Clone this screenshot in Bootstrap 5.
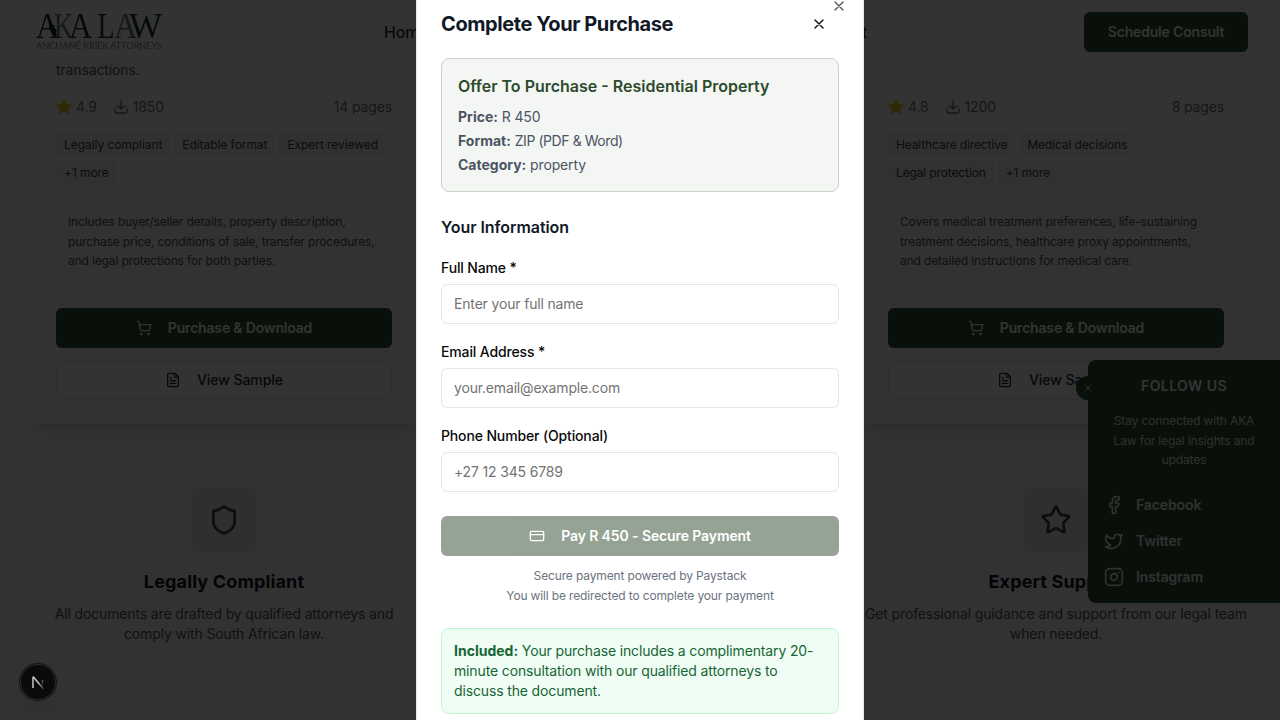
<!DOCTYPE html>
<html lang="en">
<head>
<meta charset="utf-8">
<meta name="viewport" content="width=device-width, initial-scale=1">
<title>AKA Law – Complete Your Purchase</title>
<link href="https://cdn.jsdelivr.net/npm/bootstrap@5.3.0/dist/css/bootstrap.min.css" rel="stylesheet">
<style>
  :root { --brand: #2d4a2d; }
  body { font-family: Inter, "Liberation Sans", sans-serif; font-size: 14px; line-height: 20px; letter-spacing: -.01em; height: 720px; overflow: hidden; background: #f9fafb; color: #4b5563; }
  p { margin: 0; }
  svg { flex: none; display: block; }
  .ico { fill: none; stroke: currentColor; stroke-width: 2; stroke-linecap: round; stroke-linejoin: round; }
  .ico-star { fill: #facc15; stroke: #facc15; }
  .ink { color: #111827; }

  .site-head { height: 65px; background: rgba(255,255,255,.97); border-bottom: 1px solid #f3f4f6; padding: 0 32px; z-index: 20; }
  .site-nav { width: 483px; left: 384px; font-size: 16px; font-weight: 500; color: #1f2937; }
  .b-brand, .b-line { height: 40px; border: 0; border-radius: 6px; font-size: 14px; font-weight: 600; line-height: 20px; letter-spacing: -.013em; padding: 0; }
  .b-brand, .b-brand:disabled { background: var(--brand); color: #fff; }
  .b-brand:disabled { opacity: .5; letter-spacing: -.008em; }
  .b-line { border: 1px solid #e5e7eb; color: #1f2937; background: #fff; font-weight: 500; letter-spacing: -.004em; }
  .b-consult { width: 164px; }
  .b-stack { gap: 12px; }

  .tri { display: grid; grid-template-columns: repeat(3, 384px); column-gap: 32px; padding: 0 32px; }
  .doc-card { height: 424px; padding: 60px 24px 24px; background: #fff; border-radius: 0 0 8px 8px; box-shadow: 0 10px 15px -3px rgba(0,0,0,.1), 0 4px 6px -4px rgba(0,0,0,.1); }
  .meta-row { color: #6b7280; margin-top: 17px; }
  .chips { gap: 4px; margin-top: 16px; height: 52px; align-content: flex-start; }
  .chip { background: #f3f4f6; color: #374151; border-radius: 4px; font-size: 12px; line-height: 16px; padding: 4px 8px; letter-spacing: -.005em; }
  .chips-tight .chip { letter-spacing: -.011em; }
  .includes { background: #f9fafb; border-radius: 8px; font-size: 12px; line-height: 19.5px; letter-spacing: -.012em; padding: 11px 12px 13px; height: 82.5px; margin: 16px 0 24.5px; }
  .feat { margin-top: 64px; }
  .feat-tile { width: 64px; height: 64px; border-radius: 8px; background: #e7eae7; color: var(--brand); }
  .feat h3 { font-size: 18px; line-height: 28px; font-weight: 700; letter-spacing: .008em; margin: 16px 0 8px; }

  .follow { top: 360px; right: 0; width: 192px; height: 243px; background: var(--brand); color: #fff; border-radius: 8px 0 0 8px; padding: 16px; z-index: 30; }
  .follow h4 { font-size: 14px; line-height: 20px; font-weight: 600; letter-spacing: .03em; margin: 0 0 15px; }
  .follow .blurb { font-size: 12px; line-height: 19.5px; opacity: .9; margin-bottom: 25px; }
  .follow .links { gap: 16px; font-weight: 600; letter-spacing: -.008em; opacity: .95; }
  .follow-x { width: 24px; height: 24px; left: -12px; top: 16px; border-radius: 50%; background: #2d4a2d; }

  .veil { background: rgba(0,0,0,.8); z-index: 40; }
  .buy { width: 448px; height: 758px; background: #fff; border: 1px solid #e5e7eb; padding: 24px; z-index: 50; }
  .buy-close { right: 16px; top: 16px; opacity: .7; color: #0a0a0a; }
  .buy h2 { font-size: 20px; line-height: 28px; font-weight: 700; letter-spacing: -.0206em; }
  .ghost { width: 40px; height: 36px; color: #0a0a0a; }
  .offer { margin-top: 16px; border: 1px solid #cbd2cb; background: #f4f6f4; border-radius: 8px; padding: 15px 16px 16px; height: 134px; }
  .offer h3 { font-size: 16px; line-height: 24px; font-weight: 600; letter-spacing: 0; color: var(--brand); margin: 0 0 9px; }
  .offer strong, .included strong { font-weight: 700; letter-spacing: 0; }
  .fmt { letter-spacing: -.031em; }
  .buy h4 { font-size: 16px; line-height: 24px; font-weight: 600; letter-spacing: -.004em; margin: 23px 0 17px; }
  .fields { gap: 16px; }
  .fields label { font-weight: 500; line-height: 24px; margin-bottom: 4px; color: #0a0a0a; }
  .fields .form-control { height: 40px; border: 1px solid #e5e5e5; border-radius: 6px; padding: 0 12px 2px; font-size: 14px; letter-spacing: -.012em; }
  .fields .form-control::placeholder { color: #737373; opacity: 1; }
  .fine { font-size: 12px; line-height: 16px; gap: 4px; color: #6b7280; margin: 12px 0 24px; letter-spacing: -.012em; }
  .included { border: 1px solid #bbf7d0; background: #f0fdf4; color: #166534; border-radius: 8px; padding: 12px; }

  .dev-badge { left: 20px; top: 664px; width: 36px; height: 36px; border-radius: 50%; background: #0a0a0a; z-index: 60; box-shadow: 0 0 0 1px #151515, inset 0 0 0 1px #2a2a2a, 0 16px 32px -8px rgba(0,0,0,.24); }
</style>
<script src="https://cdn.jsdelivr.net/npm/bootstrap@5.3.0/dist/js/bootstrap.bundle.min.js"></script>
</head>
<body>
<svg class="d-none" aria-hidden="true">
  <symbol id="i-x" viewBox="0 0 24 24"><path d="M18 6 6 18M6 6l12 12"/></symbol>
  <symbol id="i-dl" viewBox="0 0 24 24"><path d="M21 15v4a2 2 0 0 1-2 2H5a2 2 0 0 1-2-2v-4M7 10l5 5 5-5M12 15V3"/></symbol>
  <symbol id="i-star" viewBox="0 0 24 24"><path d="M11.525 2.295a.53.53 0 0 1 .95 0l2.31 4.679a2.123 2.123 0 0 0 1.595 1.16l5.166.756a.53.53 0 0 1 .294.904l-3.736 3.638a2.123 2.123 0 0 0-.611 1.878l.882 5.14a.53.53 0 0 1-.771.56l-4.618-2.428a2.122 2.122 0 0 0-1.973 0L6.396 21.01a.53.53 0 0 1-.77-.56l.881-5.139a2.122 2.122 0 0 0-.611-1.879L2.16 9.795a.53.53 0 0 1 .294-.906l5.165-.755a2.122 2.122 0 0 0 1.597-1.16z"/></symbol>
  <symbol id="i-cart" viewBox="0 0 24 24"><circle cx="8" cy="21" r="1"/><circle cx="19" cy="21" r="1"/><path d="M2.05 2.05h2l2.66 12.42a2 2 0 0 0 2 1.58h9.78a2 2 0 0 0 1.95-1.57l1.65-7.43H5.12"/></symbol>
  <symbol id="i-file" viewBox="0 0 24 24"><path d="M15 2H6a2 2 0 0 0-2 2v16a2 2 0 0 0 2 2h12a2 2 0 0 0 2-2V7ZM14 2v4a2 2 0 0 0 2 2h4M10 9H8M16 13H8M16 17H8"/></symbol>
  <symbol id="i-card" viewBox="0 0 24 24"><rect width="20" height="14" x="2" y="5" rx="2"/><path d="M2 10h20"/></symbol>
  <symbol id="i-shield" viewBox="0 0 24 24"><path d="M20 13c0 5-3.500 7.500-7.660 8.950a1 1 0 0 1-.67-.01C7.500 20.500 4 18 4 13V6a1 1 0 0 1 1-1c2 0 4.500-1.200 6.240-2.720a1.170 1.170 0 0 1 1.520 0C14.510 3.810 17 5 19 5a1 1 0 0 1 1 1z"/></symbol>
</svg>

<header class="site-head position-fixed top-0 start-0 w-100 d-flex align-items-center justify-content-between">
  <svg width="136" height="64" viewBox="0 0 136 64" font-family="'Liberation Serif', serif" font-size="36" fill="#1b3d27">
    <text x="22" y="37.500" textLength="19" lengthAdjust="spacingAndGlyphs" fill="#6b7f73">K</text>
    <text x="4" y="37.500" textLength="23" lengthAdjust="spacingAndGlyphs">A</text>
    <text x="37" y="37.500" textLength="23" lengthAdjust="spacingAndGlyphs">A</text>
    <text x="65.500" y="37.500" textLength="17" lengthAdjust="spacingAndGlyphs">L</text>
    <text x="82" y="37.500" textLength="23" lengthAdjust="spacingAndGlyphs" fill="#6b7f73">A</text>
    <text x="97" y="37.500" textLength="33" lengthAdjust="spacingAndGlyphs">W</text>
    <path d="M17 20l3 2 0 2 3 2-1 2 3 2-1 2 1 4-5-2-3-6z" fill="#10281a"/>
    <text x="4" y="48.500" font-family="Lato, sans-serif" font-size="8.500" textLength="126" lengthAdjust="spacingAndGlyphs" fill="#7b8280">ANCHANÉ KRIEK ATTORNEYS</text>
  </svg>
  <nav class="site-nav position-absolute d-flex justify-content-between"><span>Home</span><span>Contact</span></nav>
  <button class="btn b-brand b-consult" type="button">Schedule Consult</button>
</header>

<main>
  <section class="tri">
    <article class="doc-card">
      <p>transactions.</p>
      <div class="meta-row d-flex align-items-center">
        <svg class="ico ico-star me-1" width="16" height="16"><use href="#i-star"/></svg>4.9
        <svg class="ico ms-3 me-1" width="16" height="16"><use href="#i-dl"/></svg>1850
        <span class="ms-auto">14 pages</span>
      </div>
      <div class="chips d-flex flex-wrap"><span class="chip">Legally compliant</span><span class="chip">Editable format</span><span class="chip">Expert reviewed</span><span class="chip">+1 more</span></div>
      <div class="includes">Includes buyer/seller details, property description,<br>purchase price, conditions of sale, transfer procedures,<br>and legal protections for both parties.</div>
      <div class="d-grid b-stack">
        <button class="btn b-brand d-flex align-items-center justify-content-center gap-3" type="button"><svg class="ico" width="16" height="16"><use href="#i-cart"/></svg>Purchase &amp; Download</button>
        <button class="btn b-line d-flex align-items-center justify-content-center gap-3" type="button"><svg class="ico" width="16" height="16"><use href="#i-file"/></svg>View Sample</button>
      </div>
    </article>
    <article class="doc-card"></article>
    <article class="doc-card">
      <p>&nbsp;</p>
      <div class="meta-row d-flex align-items-center">
        <svg class="ico ico-star me-1" width="16" height="16"><use href="#i-star"/></svg>4.8
        <svg class="ico ms-3 me-1" width="16" height="16"><use href="#i-dl"/></svg>1200
        <span class="ms-auto">8 pages</span>
      </div>
      <div class="chips chips-tight d-flex flex-wrap"><span class="chip">Healthcare directive</span><span class="chip">Medical decisions</span><span class="chip">Legal protection</span><span class="chip">+1 more</span></div>
      <div class="includes">Covers medical treatment preferences, life-sustaining<br>treatment decisions, healthcare proxy appointments,<br>and detailed instructions for medical care.</div>
      <div class="d-grid b-stack">
        <button class="btn b-brand d-flex align-items-center justify-content-center gap-3" type="button"><svg class="ico" width="16" height="16"><use href="#i-cart"/></svg>Purchase &amp; Download</button>
        <button class="btn b-line d-flex align-items-center justify-content-center gap-3" type="button"><svg class="ico" width="16" height="16"><use href="#i-file"/></svg>View Sample</button>
      </div>
    </article>
  </section>

  <section class="tri feat text-center">
    <div>
      <div class="feat-tile mx-auto d-flex align-items-center justify-content-center"><svg class="ico" width="32" height="32"><use href="#i-shield"/></svg></div>
      <h3 class="ink">Legally Compliant</h3>
      <p>All documents are drafted by qualified attorneys and<br>comply with South African law.</p>
    </div>
    <div></div>
    <div>
      <div class="feat-tile mx-auto d-flex align-items-center justify-content-center"><svg class="ico" width="32" height="32"><use href="#i-star"/></svg></div>
      <h3 class="ink">Expert Support</h3>
      <p>Get professional guidance and support from our legal team<br>when needed.</p>
    </div>
  </section>
</main>

<aside class="follow position-fixed">
  <div class="follow-x position-absolute d-flex align-items-center justify-content-center"><svg class="ico" width="12" height="12"><use href="#i-x"/></svg></div>
  <h4 class="text-center">FOLLOW US</h4>
  <p class="blurb text-center">Stay connected with AKA<br>Law for legal insights and<br>updates</p>
  <div class="links d-flex flex-column">
    <div class="d-flex gap-2 align-items-center"><svg class="ico me-1" width="20" height="20" viewBox="0 0 24 24"><path d="M18 2h-3a5 5 0 0 0-5 5v3H7v4h3v8h4v-8h3l1-4h-4V7a1 1 0 0 1 1-1h3z"/></svg>Facebook</div>
    <div class="d-flex gap-2 align-items-center"><svg class="ico me-1" width="20" height="20" viewBox="0 0 24 24"><path d="M22 4s-.7 2.100-2 3.400c1.600 10-9.400 17.300-18 11.600 2.200.1 4.400-.6 6-2C3 15.500.5 9.600 3 5c2.200 2.600 5.600 4.100 9 4-.9-4.200 4-6.600 7-3.800 1.100 0 3-1.200 3-1.200z"/></svg>Twitter</div>
    <div class="d-flex gap-2 align-items-center"><svg class="ico me-1" width="20" height="20" viewBox="0 0 24 24"><rect width="20" height="20" x="2" y="2" rx="5"/><path d="M16 11.370A4 4 0 1 1 12.630 8 4 4 0 0 1 16 11.370zM17.500 6.500h.01"/></svg>Instagram</div>
  </div>
</aside>

<div class="veil position-fixed top-0 start-0 w-100 h-100"></div>

<div class="buy position-fixed top-50 start-50 translate-middle" role="dialog" aria-modal="true">
  <div class="buy-close position-absolute"><svg class="ico" width="16" height="16"><use href="#i-x"/></svg></div>
  <div class="d-flex align-items-center justify-content-between">
    <h2 class="ink m-0">Complete Your Purchase</h2>
    <div class="ghost d-flex align-items-center justify-content-center"><svg class="ico" width="16" height="16"><use href="#i-x"/></svg></div>
  </div>
  <div class="offer">
    <h3>Offer To Purchase - Residential Property</h3>
    <div class="d-flex flex-column gap-1">
      <p><strong>Price:</strong> R 450</p>
      <p><strong>Format:</strong> <span class="fmt">ZIP (PDF &amp; Word)</span></p>
      <p><strong>Category:</strong> property</p>
    </div>
  </div>
  <h4 class="ink">Your Information</h4>
  <form class="fields d-flex flex-column">
    <div><label class="d-block" for="nm">Full Name *</label><input id="nm" class="form-control" placeholder="Enter your full name"></div>
    <div><label class="d-block" for="em">Email Address *</label><input id="em" class="form-control" placeholder="your.email@example.com"></div>
    <div><label class="d-block" for="ph">Phone Number (Optional)</label><input id="ph" class="form-control" placeholder="+27 12 345 6789"></div>
    <button class="btn b-brand mt-2 d-flex align-items-center justify-content-center gap-3" type="button" disabled><svg class="ico" width="16" height="16"><use href="#i-card"/></svg>Pay R 450 - Secure Payment</button>
  </form>
  <div class="fine d-flex flex-column text-center"><p>Secure payment powered by Paystack</p><p>You will be redirected to complete your payment</p></div>
  <div class="included"><strong>Included:</strong> Your purchase includes a complimentary 20-<br>minute consultation with our qualified attorneys to<br>discuss the document.</div>
</div>

<div class="dev-badge position-fixed d-flex align-items-center justify-content-center">
  <svg width="14" height="14" viewBox="0 0 14 14" fill="none" stroke-width="1.500">
    <defs><linearGradient id="fade" x1="2" y1="1" x2="13" y2="14" gradientUnits="userSpaceOnUse"><stop offset=".5" stop-color="#c8c8c8"/><stop offset="1" stop-color="#c8c8c8" stop-opacity=".15"/></linearGradient>
    <linearGradient id="fade2" x1="0" y1="5" x2="0" y2="11" gradientUnits="userSpaceOnUse"><stop stop-color="#c8c8c8" stop-opacity=".5"/><stop offset="1" stop-color="#c8c8c8" stop-opacity="0"/></linearGradient></defs>
    <path d="M2 13V2" stroke="#c8c8c8"/><path d="M2 1.500 12.500 14" stroke="url(#fade)"/><path d="M11.500 5v6" stroke="url(#fade2)"/>
  </svg>
</div>
</body>
</html>
